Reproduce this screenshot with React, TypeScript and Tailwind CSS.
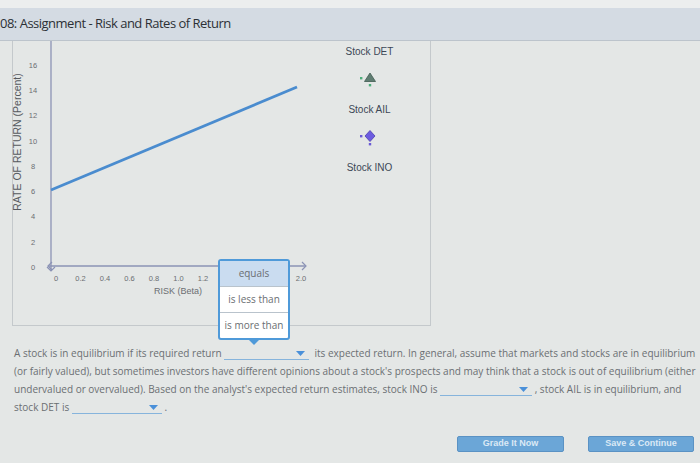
const Y_TICKS = [0, 2, 4, 6, 8, 10, 12, 14, 16];
// 1.4 - 1.8 sit under the open option menu, so they are not drawn
const X_TICKS: [number, string][] = [
  [0, "0"],
  [1, "0.2"],
  [2, "0.4"],
  [3, "0.6"],
  [4, "0.8"],
  [5, "1.0"],
  [6, "1.2"],
  [10, "2.0"],
];

// page coords: beta 0 -> x 56, 0.2 step -> 24.5px; 0% -> y 267, 2% step -> 25.3px
const bx = (i: number) => 56 + i * 24.5;
const ry = (r: number) => 267 - r * 12.65;

function Chart() {
  return (
    <svg width={288} height={285} viewBox="13 41 288 285" className="block overflow-visible">
      {/* axes */}
      <line x1={51} y1={41} x2={51} y2={270} stroke="#8b93b5" strokeWidth={1.3} />
      <line x1={48} y1={266} x2={306} y2={266} stroke="#8b93b5" strokeWidth={1.3} />
      <polyline points="52,262 48,266 52,270" fill="none" stroke="#8b93b5" strokeWidth={1.2} />
      <polyline points="47,267 51,271 55,267" fill="none" stroke="#8b93b5" strokeWidth={1.2} />
      <polyline points="302,262 306,266 302,270" fill="none" stroke="#8b93b5" strokeWidth={1.2} />

      {/* security market line */}
      <line x1={51} y1={190} x2={297} y2={87} stroke="#4a8ccf" strokeWidth={2.8} />

      {Y_TICKS.map((t) => (
        <text
          key={t}
          x={33}
          y={ry(t) + 3}
          textAnchor="middle"
          fontSize={7.5}
          fill="#6b6e72"
          fontFamily="Liberation Sans, Arial, sans-serif"
        >
          {t}
        </text>
      ))}
      {X_TICKS.map(([i, t]) => (
        <text
          key={t}
          x={bx(i)}
          y={281}
          textAnchor="middle"
          fontSize={7.5}
          fill="#6b6e72"
          fontFamily="Liberation Sans, Arial, sans-serif"
        >
          {t}
        </text>
      ))}
      <text
        x={178}
        y={294}
        textAnchor="middle"
        fontSize={9}
        fill="#6b6e72"
        fontFamily="Liberation Sans, Arial, sans-serif"
      >
        RISK (Beta)
      </text>
      <text
        x={0}
        y={0}
        transform="translate(20.5 142) rotate(-90)"
        textAnchor="middle"
        fontSize={10.5}
        fill="#55595e"
        fontFamily="Liberation Sans, Arial, sans-serif"
      >
        RATE OF RETURN (Percent)
      </text>
    </svg>
  );
}

function TriangleMark() {
  return (
    <svg width={22} height={16} viewBox="0 0 22 16">
      <rect x={1} y={5} width={2.4} height={2.4} fill="#4fae7c" />
      <rect x={9.8} y={12} width={2.4} height={2.4} fill="#4fae7c" />
      <polygon points="11,1 16.5,9.5 5.5,9.5" fill="#5f7d72" stroke="#3f5a50" strokeWidth={0.8} />
    </svg>
  );
}

function DiamondMark() {
  return (
    <svg width={22} height={18} viewBox="0 0 22 18">
      <rect x={1} y={6} width={2.4} height={2.4} fill="#6a5bd6" />
      <rect x={9.8} y={14} width={2.4} height={2.4} fill="#6a5bd6" />
      <polygon points="11,1.5 16,7 11,12.5 6,7" fill="#6c5ce0" stroke="#4a3fae" strokeWidth={0.8} />
    </svg>
  );
}

function Legend() {
  return (
    <div className="flex w-[129px] flex-col items-center gap-[13px] pl-[8px] pt-[2px] text-[10px] text-[#3c4756]">
      <div className="flex h-[16px] items-center">Stock DET</div>
      <div className="flex h-[16px] items-center">
        <TriangleMark />
      </div>
      <div className="flex h-[16px] items-center">Stock AIL</div>
      <div className="flex h-[16px] items-center">
        <DiamondMark />
      </div>
      <div className="flex h-[16px] items-center">Stock INO</div>
    </div>
  );
}

function Blank({ className }: { className: string }) {
  return (
    <span className={`inline-flex h-[13px] items-end justify-end border-b border-[#86b4dc] pb-[3px] pr-[4px] ${className}`}>
      <svg width={9} height={5} viewBox="0 0 9 5">
        <polygon points="0,0 9,0 4.5,5" fill="#4a90d9" />
      </svg>
    </span>
  );
}

function OptionMenu() {
  return (
    <div className="absolute left-[218px] top-[259px] w-[72px]">
      <div className="overflow-hidden rounded-[3px] border-2 border-[#4f9ad9] bg-white text-center font-['Open_Sans',sans-serif] text-[10px] text-[#6a6e72]">
        <div className="flex h-[26px] items-center justify-center border-b border-[#b9c3cc] bg-[#cadcf0]">equals</div>
        <div className="flex h-[26px] items-center justify-center border-b border-[#b9c3cc]">is less than</div>
        <div className="flex h-[25px] items-center justify-center">is more than</div>
      </div>
      <div className="mx-auto h-0 w-0 border-x-[5px] border-t-[5px] border-x-transparent border-t-[#4f9ad9]" />
    </div>
  );
}

export default function App() {
  return (
    <div className="relative h-[463px] w-[700px] overflow-hidden bg-[#e4e7e6] font-['Liberation_Sans',Arial,sans-serif]">
      <div className="h-[8px] bg-[#eceeee]" />
      <div className="flex h-[33px] items-center border-b border-[#bcc4cc] bg-[#d4dbe3]">
        <h1 className="whitespace-nowrap font-['Open_Sans',sans-serif] text-[13px] tracking-[-0.5px] text-[#2c3035]">
          08: Assignment - Risk and Rates of Return
        </h1>
      </div>

      <div className="ml-[12px] flex h-[285px] w-[419px] border-x border-b border-[#c4c9cc]">
        <Chart />
        <Legend />
      </div>

      <div className="ml-[14px] mt-[18px] flex flex-col font-['Open_Sans',sans-serif] text-[10px] text-[#6b6f73]">
        <div className="flex h-[18px] items-center whitespace-pre">
          <span>A stock is in equilibrium if its required return </span>
          <Blank className="w-[85px]" />
          <span>  its expected return. In general, assume that markets and stocks are in equilibrium</span>
        </div>
        <div className="flex h-[18px] items-center whitespace-pre">
          <span>
            (or fairly valued), but sometimes investors have different opinions about a stock's prospects and may think
            that a stock is out of equilibrium (either
          </span>
        </div>
        <div className="flex h-[18px] items-center whitespace-pre">
          <span>undervalued or overvalued). Based on the analyst's expected return estimates, stock INO is </span>
          <Blank className="w-[92px]" />
          <span> , stock AIL is in equilibrium, and</span>
        </div>
        <div className="flex h-[18px] items-center whitespace-pre">
          <span>stock DET is </span>
          <Blank className="w-[90px]" />
          <span> .</span>
        </div>
      </div>

      <div className="mr-[6px] mt-[20px] flex justify-end gap-[24px]">
        <button
          type="button"
          className="h-[16px] w-[107px] rounded-[2px] border border-[#5a92c4] bg-[#6ba6d7] text-[9px] font-semibold text-[#dbe9f5]"
        >
          Grade It Now
        </button>
        <button
          type="button"
          className="h-[16px] w-[106px] rounded-[2px] border border-[#5a92c4] bg-[#6ba6d7] text-[9px] font-semibold text-[#dbe9f5]"
        >
          Save &amp; Continue
        </button>
      </div>

      <OptionMenu />
    </div>
  );
}
